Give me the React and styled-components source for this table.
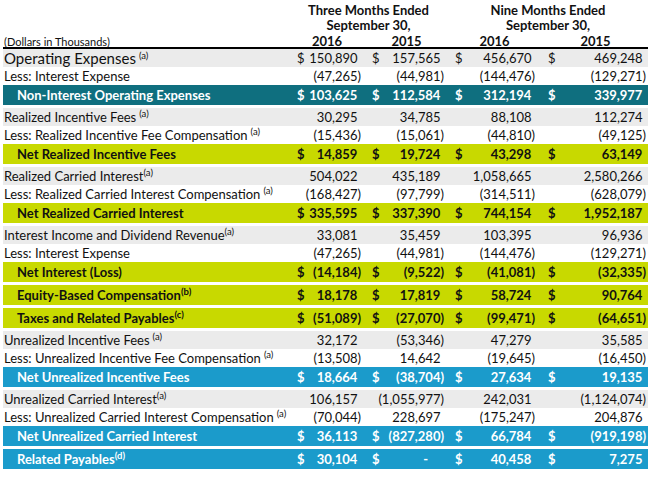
import React from 'react';
import styled, { createGlobalStyle, css } from 'styled-components';

const GlobalStyle = createGlobalStyle`
  html, body { margin: 0; padding: 0; background: #fff; }
  body { font-family: Lato, "Noto Sans", sans-serif; color: #000; }
`;

const COLS = '290px 68px 83px 91px 111px';
const PADS = [4, 11, 11, 13];
const YEAR_PADS = [0, 8, 10, 10];

const palette = {
  gray: { bg: '#ebebeb', fg: '#111', bold: false, h: 18 },
  plain: { bg: '#ffffff', fg: '#111', bold: false, h: 18 },
  teal: { bg: '#0f6f7f', fg: '#ffffff', bold: true, h: 20 },
  green: { bg: '#c8d900', fg: '#111', bold: true, h: 20 },
  blue: { bg: '#1b9bcb', fg: '#ffffff', bold: true, h: 20 },
};

const Page = styled.div`
  width: 650px;
  height: 481px;
  padding: 0 2px 0 3px;
  box-sizing: border-box;
  overflow: hidden;
`;

const Header = styled.div`
  display: grid;
  grid-template-columns: ${COLS};
  grid-template-rows: 15px 15px 16px;
  padding-top: 3px;
  height: 49px;
  box-sizing: border-box;
  border-bottom: 2px solid #000;
  font-weight: 700;
  font-size: 13px;
  color: #111;
`;

const PeriodTitle = styled.div`
  grid-column: ${(p) => p.$col} / span 2;
  grid-row: ${(p) => p.$row};
  text-align: center;
  line-height: 15px;
  padding-left: ${(p) => p.$shift || 0}px;
`;

const Units = styled.div`
  grid-column: 1;
  grid-row: 3;
  font-weight: 400;
  font-size: 11px;
  line-height: 17px;
  padding-left: 1px;
`;

const Year = styled.div`
  grid-row: 3;
  grid-column: ${(p) => p.$col};
  text-align: center;
  line-height: 16px;
  padding-left: ${(p) => p.$shift}px;
`;

const Body = styled.div`
  display: flex;
  flex-direction: column;
  gap: 3px;
`;

const Group = styled.div`
  display: flex;
  flex-direction: column;
`;

const Row = styled.div`
  display: grid;
  grid-template-columns: ${COLS};
  align-items: center;
  height: ${(p) => palette[p.$kind].h}px;
  background: ${(p) => palette[p.$kind].bg};
  color: ${(p) => palette[p.$kind].fg};
  font-weight: ${(p) => (palette[p.$kind].bold ? 700 : 400)};
  font-size: 13px;
  white-space: nowrap;
`;

const Label = styled.div`
  padding-left: ${(p) => (p.$total ? 14 : 1)}px;
  font-size: ${(p) => p.$size || 13}px;
  overflow: visible;
`;

const Sup = styled.sup`
  font-size: 9.5px;
  margin-left: ${(p) => (p.$gap ? 3 : 0)}px;
  vertical-align: 5px;
  line-height: 0;
`;

const Cell = styled.div`
  display: flex;
  justify-content: space-between;
  padding-left: ${(p) => p.$pad}px;
`;

const Dollar = styled.span``;

const Num = styled.span`
  ${(p) =>
    p.$dash &&
    css`
      padding-right: 16px;
    `}
`;

const Hidden = styled.span`
  visibility: hidden;
`;

const groups = [
  [
    { label: 'Operating Expenses', size: 15, sup: 'a', gap: true, kind: 'gray', dollar: true, v: ['150,890', '157,565', '456,670', '469,248'] },
    { label: 'Less: Interest Expense', kind: 'plain', v: ['(47,265)', '(44,981)', '(144,476)', '(129,271)'] },
    { label: 'Non-Interest Operating Expenses', kind: 'teal', dollar: true, v: ['103,625', '112,584', '312,194', '339,977'] },
  ],
  [
    { label: 'Realized Incentive Fees', sup: 'a', gap: true, kind: 'gray', v: ['30,295', '34,785', '88,108', '112,274'] },
    { label: 'Less: Realized Incentive Fee Compensation', sup: 'a', gap: true, kind: 'plain', v: ['(15,436)', '(15,061)', '(44,810)', '(49,125)'] },
    { label: 'Net Realized Incentive Fees', kind: 'green', dollar: true, v: ['14,859', '19,724', '43,298', '63,149'] },
  ],
  [
    { label: 'Realized Carried Interest', sup: 'a', kind: 'gray', v: ['504,022', '435,189', '1,058,665', '2,580,266'] },
    { label: 'Less: Realized Carried Interest Compensation', sup: 'a', gap: true, kind: 'plain', v: ['(168,427)', '(97,799)', '(314,511)', '(628,079)'] },
    { label: 'Net Realized Carried Interest', kind: 'green', dollar: true, v: ['335,595', '337,390', '744,154', '1,952,187'] },
  ],
  [
    { label: 'Interest Income and Dividend Revenue', sup: 'a', kind: 'gray', v: ['33,081', '35,459', '103,395', '96,936'] },
    { label: 'Less: Interest Expense', kind: 'plain', v: ['(47,265)', '(44,981)', '(144,476)', '(129,271)'] },
    { label: 'Net Interest (Loss)', kind: 'green', dollar: true, v: ['(14,184)', '(9,522)', '(41,081)', '(32,335)'] },
  ],
  [{ label: 'Equity-Based Compensation', sup: 'b', kind: 'green', dollar: true, v: ['18,178', '17,819', '58,724', '90,764'] }],
  [{ label: 'Taxes and Related Payables', sup: 'c', kind: 'green', dollar: true, v: ['(51,089)', '(27,070)', '(99,471)', '(64,651)'] }],
  [
    { label: 'Unrealized Incentive Fees', sup: 'a', gap: true, kind: 'gray', v: ['32,172', '(53,346)', '47,279', '35,585'] },
    { label: 'Less: Unrealized Incentive Fee Compensation', sup: 'a', gap: true, kind: 'plain', v: ['(13,508)', '14,642', '(19,645)', '(16,450)'] },
    { label: 'Net Unrealized Incentive Fees', kind: 'blue', dollar: true, v: ['18,664', '(38,704)', '27,634', '19,135'] },
  ],
  [
    { label: 'Unrealized Carried Interest', sup: 'a', kind: 'gray', v: ['106,157', '(1,055,977)', '242,031', '(1,124,074)'] },
    { label: 'Less: Unrealized Carried Interest Compensation', sup: 'a', gap: true, kind: 'plain', v: ['(70,044)', '228,697', '(175,247)', '204,876'] },
    { label: 'Net Unrealized Carried Interest', kind: 'blue', dollar: true, v: ['36,113', '(827,280)', '66,784', '(919,198)'] },
  ],
  [{ label: 'Related Payables', sup: 'd', kind: 'blue', dollar: true, v: ['30,104', '-', '40,458', '7,275'] }],
];

function Value({ value }) {
  if (value === '-') return <Num $dash>-</Num>;
  if (value.startsWith('(')) return <Num>{value}</Num>;
  return (
    <Num>
      {value}
      <Hidden>)</Hidden>
    </Num>
  );
}

export default function App() {
  return (
    <>
      <GlobalStyle />
      <Page>
        <Header>
          <PeriodTitle $col={2} $row={1}>Three Months Ended</PeriodTitle>
          <PeriodTitle $col={2} $row={2}>September 30,</PeriodTitle>
          <PeriodTitle $col={4} $row={1} $shift={6}>Nine Months Ended</PeriodTitle>
          <PeriodTitle $col={4} $row={2} $shift={6}>September 30,</PeriodTitle>
          <Units>(Dollars in Thousands)</Units>
          {['2016', '2015', '2016', '2015'].map((y, i) => (
            <Year key={i} $col={i + 2} $shift={YEAR_PADS[i]}>{y}</Year>
          ))}
        </Header>
        <Body>
          {groups.map((g, gi) => (
            <Group key={gi}>
              {g.map((r, ri) => (
                <Row key={ri} $kind={r.kind}>
                  <Label $total={palette[r.kind].bold} $size={r.size}>
                    {r.label}
                    {r.sup && <Sup $gap={r.gap}>({r.sup})</Sup>}
                  </Label>
                  {r.v.map((val, ci) => (
                    <Cell key={ci} $pad={PADS[ci]}>
                      <Dollar>{r.dollar ? '$' : ''}</Dollar>
                      <Value value={val} />
                    </Cell>
                  ))}
                </Row>
              ))}
            </Group>
          ))}
        </Body>
      </Page>
    </>
  );
}
